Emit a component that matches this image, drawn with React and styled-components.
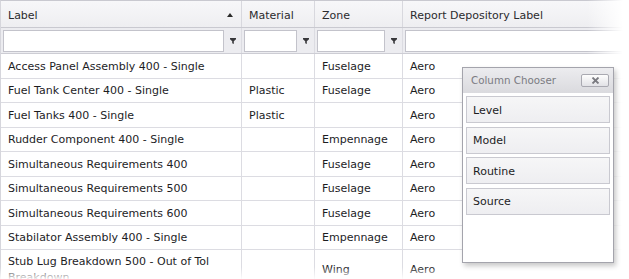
import styled, { createGlobalStyle } from 'styled-components';

const GlobalStyle = createGlobalStyle`
  html, body {
    margin: 0;
    padding: 0;
    background: #fff;
  }
  body {
    font-family: "DejaVu Sans", Verdana, sans-serif;
    font-size: 11px;
    color: #1d1d1f;
  }
`;

const Frame = styled.div`
  position: relative;
  width: 629px;
  height: 279px;
  overflow: hidden;
`;

const Grid = styled.div`
  width: 680px;
  border-top: 1px solid #c9c9d0;
  border-left: 1px solid #d6d6dc;
`;

const Row = styled.div`
  display: grid;
  grid-template-columns: 241px 73px 88px 1fr;
  min-height: ${(p) => p.$h || '23.5px'};
  border-bottom: 1px solid ${(p) => p.$line || '#dcdce2'};
  background: ${(p) => p.$bg || '#fff'};
`;

const Cell = styled.div`
  display: flex;
  align-items: center;
  padding: 4px 7px 2px;
  line-height: 16px;
  border-right: 1px solid ${(p) => p.$line || '#dcdce2'};
  position: relative;
`;

const HeadCell = styled(Cell)`
  color: #2b2b2e;
  padding: 3px 7px 0;
  border-right-color: #d8d8de;
`;

const SortArrow = styled.span`
  position: absolute;
  right: 8px;
  top: 12px;
  width: 0;
  height: 0;
  border-left: 3px solid transparent;
  border-right: 3px solid transparent;
  border-bottom: 4px solid #2a2a2a;
`;

const FilterCell = styled.div`
  display: flex;
  align-items: center;
  padding-left: 2px;
  border-right: 1px solid #dcdce2;
`;

const FilterInput = styled.div`
  flex: 1;
  height: 20px;
  background: #fff;
  border: 1px solid #c3c3cb;
`;

const FunnelBox = styled.div`
  width: 17px;
  display: flex;
  justify-content: center;
  align-items: center;
`;

const Chooser = styled.div`
  box-sizing: border-box;
  position: absolute;
  left: 462px;
  top: 67px;
  width: 152px;
  height: 196px;
  background: #fff;
  border: 1px solid #a4a4ac;
  box-shadow: 2px 3px 5px rgba(0, 0, 0, 0.22);
  z-index: 2;
  display: flex;
  flex-direction: column;
`;

const ChooserTitle = styled.div`
  box-sizing: border-box;
  height: 25px;
  display: flex;
  align-items: center;
  justify-content: space-between;
  padding: 0 4px 1px 8px;
  background: linear-gradient(#ececef, #dadade);
  color: #7b7b82;
  font-size: 10.3px;
`;

const CloseButton = styled.div`
  box-sizing: border-box;
  width: 28px;
  height: 13px;
  border: 1px solid #a9a9b1;
  border-radius: 2px;
  background: linear-gradient(#fdfdfd, #e2e2e6);
  display: flex;
  align-items: center;
  justify-content: center;
`;

const ChooserList = styled.div`
  display: flex;
  flex-direction: column;
  gap: 3.5px;
  padding: 3px 3px 0;
`;

const ChooserItem = styled.div`
  box-sizing: border-box;
  height: 27px;
  display: flex;
  align-items: center;
  padding: 1px 0 0 6px;
  border: 1px solid #c9c9d0;
  background: linear-gradient(#f6f6f7, #eeeef1);
  color: #1d1d1f;
`;

const FadeRight = styled.div`
  position: absolute;
  top: 0;
  right: 0;
  width: 42px;
  height: 100%;
  background: linear-gradient(to right, rgba(255, 255, 255, 0), #fff 85%);
  z-index: 1;
`;

const FadeBottom = styled.div`
  position: absolute;
  left: 0;
  bottom: 0;
  width: 100%;
  height: 12px;
  background: linear-gradient(rgba(255, 255, 255, 0), rgba(255, 255, 255, 0.9));
  z-index: 1;
`;

const Funnel = () => (
  <svg width="6" height="6" viewBox="0 0 6 6">
    <path d="M0 0h6v1.2L3.8 3.2V6L2.2 5.2V3.2L0 1.2z" fill="#38383b" />
  </svg>
);

const CloseX = () => (
  <svg width="9" height="7" viewBox="0 0 9 7">
    <path d="M1.5 0.5l6 6M7.5 0.5l-6 6" stroke="#7a7a80" strokeWidth="1.8" />
  </svg>
);

const rows = [
  ['Access Panel Assembly 400 - Single', '', 'Fuselage', 'Aero'],
  ['Fuel Tank Center 400 - Single', 'Plastic', 'Fuselage', 'Aero'],
  ['Fuel Tanks 400 - Single', 'Plastic', '', 'Aero'],
  ['Rudder Component 400 - Single', '', 'Empennage', 'Aero'],
  ['Simultaneous Requirements 400', '', 'Fuselage', 'Aero'],
  ['Simultaneous Requirements 500', '', 'Fuselage', 'Aero'],
  ['Simultaneous Requirements 600', '', 'Fuselage', 'Aero'],
  ['Stabilator Assembly 400 - Single', '', 'Empennage', 'Aero'],
  ['Stub Lug Breakdown 500 - Out of Tol Breakdown', '', 'Wing', 'Aero'],
];

const hidden = ['Level', 'Model', 'Routine', 'Source'];

const App = () => {
  return (
    <Frame>
      <GlobalStyle />
      <Grid>
        <Row $h="26px" $line="#c9c9d0" $bg="linear-gradient(#f7f7f9, #eeeef1)">
          <HeadCell>
            Label
            <SortArrow />
          </HeadCell>
          <HeadCell>Material</HeadCell>
          <HeadCell>Zone</HeadCell>
          <HeadCell>Report Depository Label</HeadCell>
        </Row>
        <Row $h="25px" $line="#cdcdd4" $bg="#ececf0">
          <FilterCell>
            <FilterInput />
            <FunnelBox>
              <Funnel />
            </FunnelBox>
          </FilterCell>
          <FilterCell>
            <FilterInput />
            <FunnelBox>
              <Funnel />
            </FunnelBox>
          </FilterCell>
          <FilterCell>
            <FilterInput />
            <FunnelBox>
              <Funnel />
            </FunnelBox>
          </FilterCell>
          <FilterCell>
            <FilterInput />
          </FilterCell>
        </Row>
        {rows.map((r, i) => (
          <Row key={i}>
            {r.map((v, j) => (
              <Cell key={j}>{v}</Cell>
            ))}
          </Row>
        ))}
      </Grid>

      <Chooser>
        <ChooserTitle>
          Column Chooser
          <CloseButton>
            <CloseX />
          </CloseButton>
        </ChooserTitle>
        <ChooserList>
          {hidden.map((name) => (
            <ChooserItem key={name}>{name}</ChooserItem>
          ))}
        </ChooserList>
      </Chooser>

      <FadeRight />
      <FadeBottom />
    </Frame>
  );
};

export default App;
